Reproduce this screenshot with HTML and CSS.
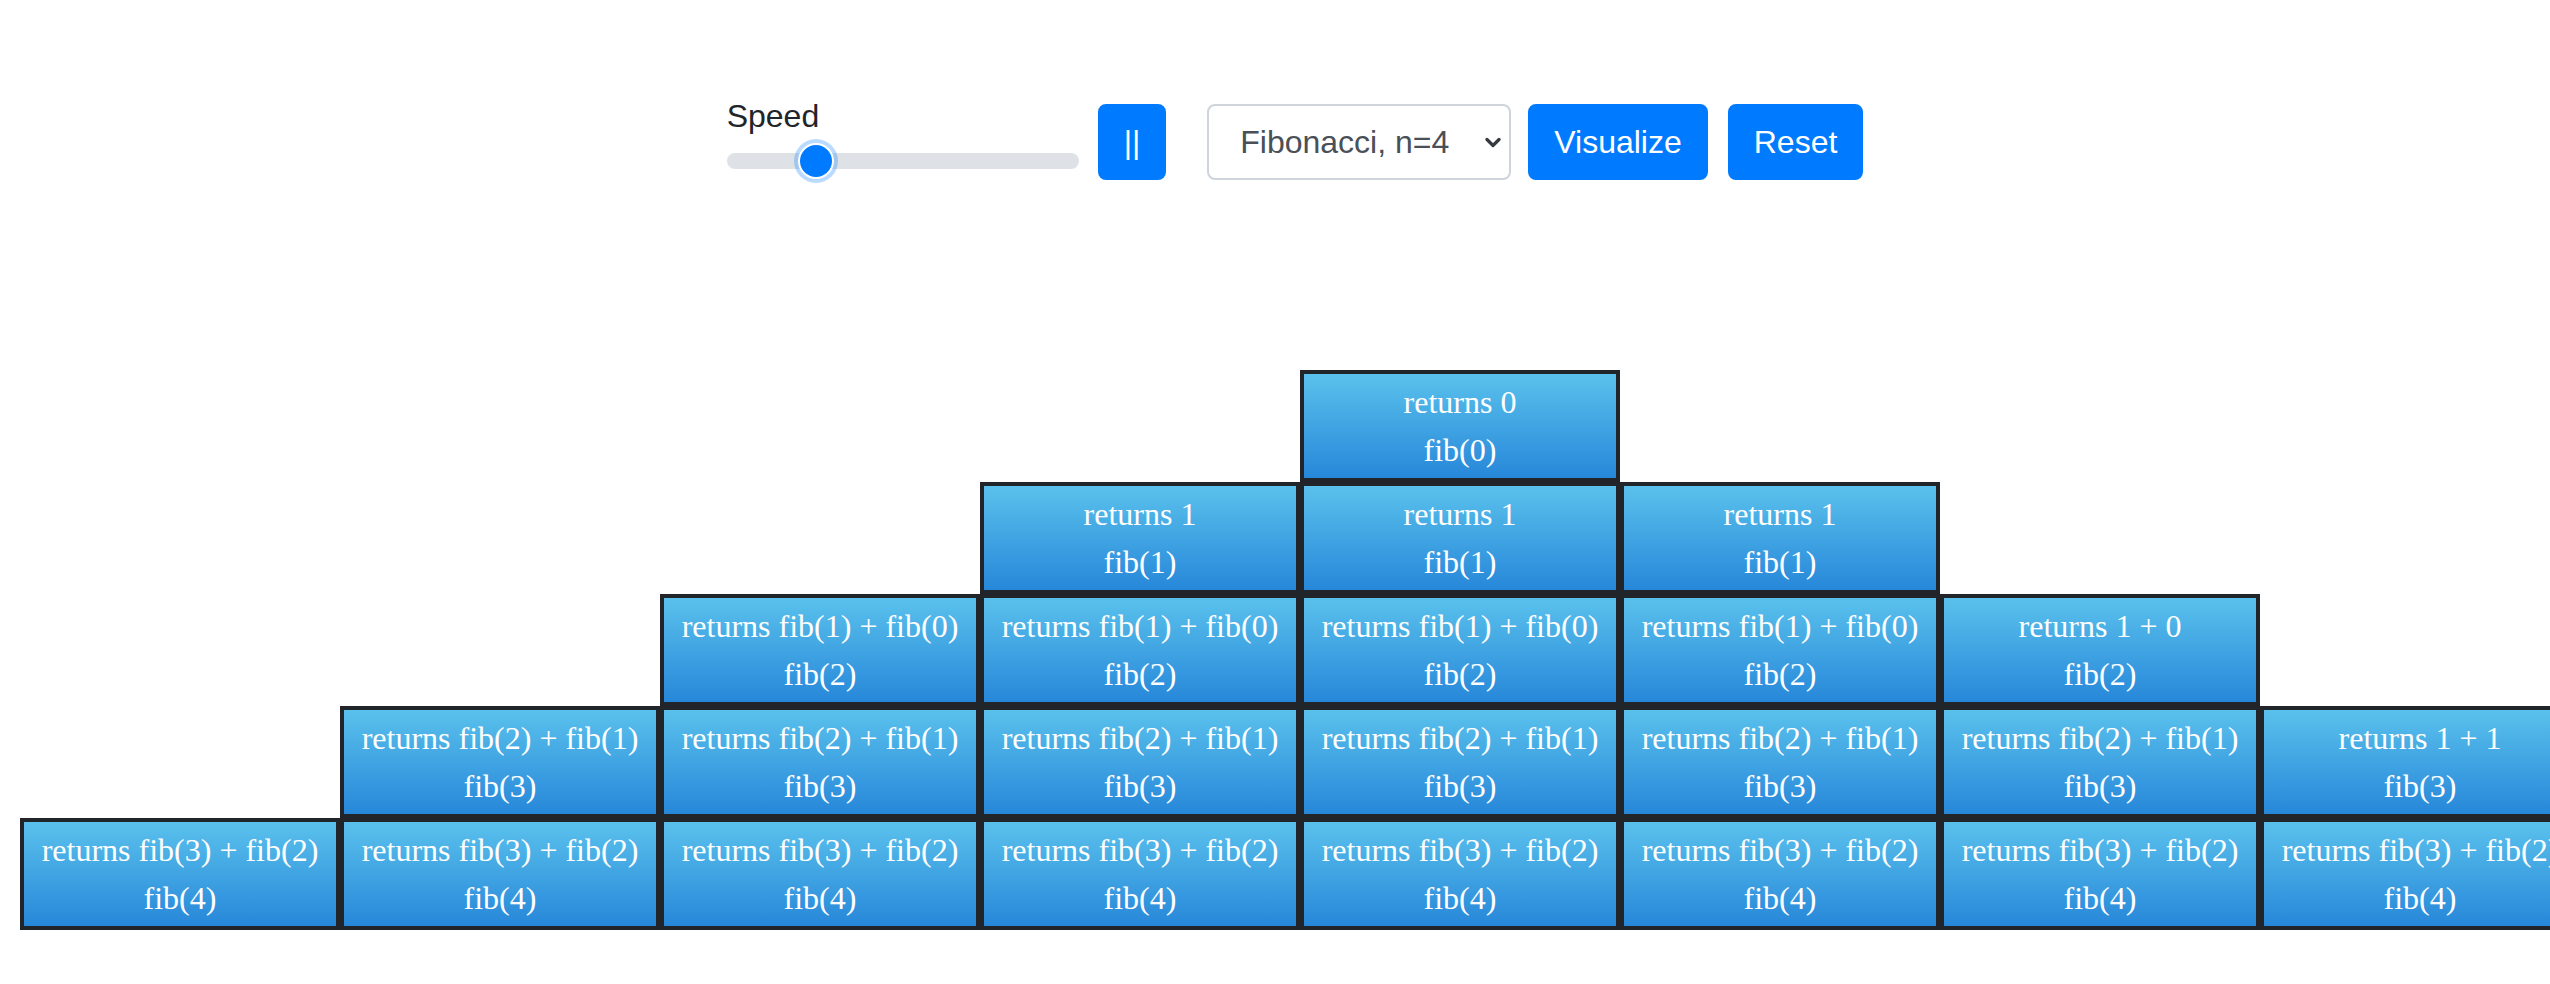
FILE: index.html
```html
<!DOCTYPE html>
<html lang="en">
<head>
<meta charset="utf-8">
<title>Recursion Visualizer</title>
<link rel="stylesheet" href="styles.css">
</head>
<body>
<div class="controls">
  <div class="speed">
    <label class="speed-label" for="speed">Speed</label>
    <input class="speed-range" id="speed" type="range" min="0" max="100" value="23">
  </div>
  <button class="btn btn-pause">||</button>
  <div class="select-wrap">
    <select class="algo-select">
      <option>Fibonacci, n=4</option>
    </select>
    <svg class="select-chevron" viewBox="0 0 16 12" width="16" height="12"><path d="M2 2.5 L8 8.5 L14 2.5" fill="none" stroke="#343a40" stroke-width="3.2" stroke-linecap="round" stroke-linejoin="round"/></svg>
  </div>
  <button class="btn btn-visualize">Visualize</button>
  <button class="btn btn-reset">Reset</button>
</div>

<div class="stacks">
  <div class="stack">
    <div class="frame"><div>returns fib(3) + fib(2)</div><div>fib(4)</div></div>
  </div>
  <div class="stack">
    <div class="frame"><div>returns fib(2) + fib(1)</div><div>fib(3)</div></div>
    <div class="frame"><div>returns fib(3) + fib(2)</div><div>fib(4)</div></div>
  </div>
  <div class="stack">
    <div class="frame"><div>returns fib(1) + fib(0)</div><div>fib(2)</div></div>
    <div class="frame"><div>returns fib(2) + fib(1)</div><div>fib(3)</div></div>
    <div class="frame"><div>returns fib(3) + fib(2)</div><div>fib(4)</div></div>
  </div>
  <div class="stack">
    <div class="frame"><div>returns 1</div><div>fib(1)</div></div>
    <div class="frame"><div>returns fib(1) + fib(0)</div><div>fib(2)</div></div>
    <div class="frame"><div>returns fib(2) + fib(1)</div><div>fib(3)</div></div>
    <div class="frame"><div>returns fib(3) + fib(2)</div><div>fib(4)</div></div>
  </div>
  <div class="stack">
    <div class="frame"><div>returns 0</div><div>fib(0)</div></div>
    <div class="frame"><div>returns 1</div><div>fib(1)</div></div>
    <div class="frame"><div>returns fib(1) + fib(0)</div><div>fib(2)</div></div>
    <div class="frame"><div>returns fib(2) + fib(1)</div><div>fib(3)</div></div>
    <div class="frame"><div>returns fib(3) + fib(2)</div><div>fib(4)</div></div>
  </div>
  <div class="stack">
    <div class="frame"><div>returns 1</div><div>fib(1)</div></div>
    <div class="frame"><div>returns fib(1) + fib(0)</div><div>fib(2)</div></div>
    <div class="frame"><div>returns fib(2) + fib(1)</div><div>fib(3)</div></div>
    <div class="frame"><div>returns fib(3) + fib(2)</div><div>fib(4)</div></div>
  </div>
  <div class="stack">
    <div class="frame"><div>returns 1 + 0</div><div>fib(2)</div></div>
    <div class="frame"><div>returns fib(2) + fib(1)</div><div>fib(3)</div></div>
    <div class="frame"><div>returns fib(3) + fib(2)</div><div>fib(4)</div></div>
  </div>
  <div class="stack">
    <div class="frame"><div>returns 1 + 1</div><div>fib(3)</div></div>
    <div class="frame"><div>returns fib(3) + fib(2)</div><div>fib(4)</div></div>
  </div>
</div>
</body>
</html>
```

FILE: styles.css
```css
html, body {
  margin: 0;
  padding: 0;
  background: #fff;
  overflow: hidden;
}

body {
  font-family: "Liberation Sans", Arial, sans-serif;
  color: #212529;
}

.controls {
  display: flex;
  justify-content: center;
  align-items: center;
  margin: 93px 0 0 40px;
}

.speed {
  display: flex;
  flex-direction: column;
  padding-bottom: 8px;
  margin-right: 19px;
}

.speed-label {
  font-size: 32px;
  line-height: 46px;
  height: 46px;
}

.speed-range {
  -webkit-appearance: none;
  appearance: none;
  width: 352px;
  height: 44px;
  margin: 0;
  padding: 0;
  background: transparent;
}

.speed-range::-webkit-slider-runnable-track {
  height: 16px;
  border-radius: 8px;
  background: #dee2e6;
}

.speed-range::-webkit-slider-thumb {
  -webkit-appearance: none;
  appearance: none;
  width: 32px;
  height: 32px;
  margin-top: -8px;
  border-radius: 50%;
  background: #007bff;
  box-shadow: 0 0 0 2px #fff, 0 0 0 6px rgba(0, 123, 255, 0.27);
}

.btn {
  font-family: "Liberation Sans", Arial, sans-serif;
  font-size: 32px;
  line-height: 48px;
  padding: 12px 24px;
  border: 2px solid #007bff;
  border-radius: 8px;
  background: #007bff;
  color: #fff;
  margin: 0;
}

.btn-pause {
  margin-right: 41px;
}

.btn-visualize {
  margin-right: 20px;
}

.select-wrap {
  position: relative;
  margin-right: 17px;
}

.algo-select {
  -webkit-appearance: none;
  appearance: none;
  box-sizing: border-box;
  width: 304px;
  height: 76px;
  padding: 12px 40px 12px 31px;
  font-family: "Liberation Sans", Arial, sans-serif;
  font-size: 32px;
  line-height: 48px;
  color: #495057;
  background: #fff;
  border: 2px solid #ced4da;
  border-radius: 8px;
  margin: 0;
}

.select-chevron {
  position: absolute;
  right: 10px;
  top: 33px;
  pointer-events: none;
}

.stacks {
  display: flex;
  align-items: flex-end;
  margin: 179px 0 0 20px;
}

.stack {
  display: flex;
  flex-direction: column;
  flex-shrink: 0;
  width: 320px;
}

.frame {
  box-sizing: border-box;
  width: 320px;
  height: 112px;
  padding: 4px 0;
  border: 4px solid #212529;
  background: linear-gradient(to bottom, #5ac1ec, #2787d9);
  color: #fff;
  text-align: center;
  font-family: "Liberation Serif", "Times New Roman", serif;
  font-size: 32px;
  line-height: 48px;
  white-space: nowrap;
}
```
